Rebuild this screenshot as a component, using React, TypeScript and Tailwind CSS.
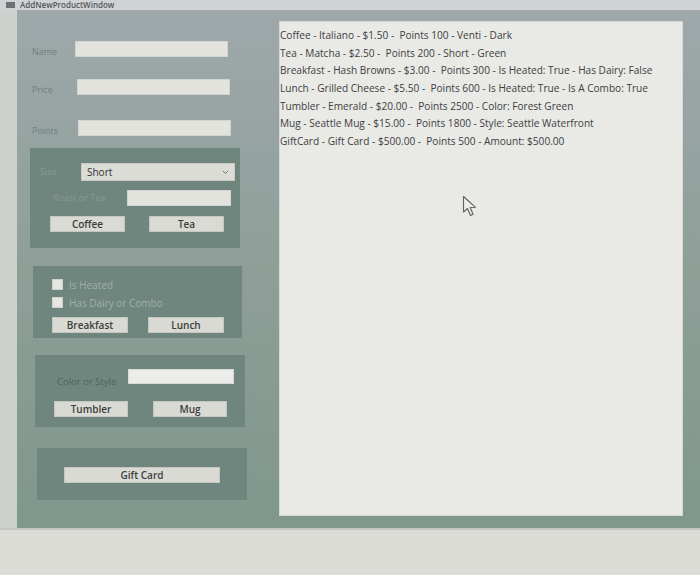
import React from 'react';

const ITEMS = [
  'Coffee - Italiano - $1.50 -  Points 100 - Venti - Dark',
  'Tea - Matcha - $2.50 -  Points 200 - Short - Green',
  'Breakfast - Hash Browns - $3.00 -  Points 300 - Is Heated: True - Has Dairy: False',
  'Lunch - Grilled Cheese - $5.50 -  Points 600 - Is Heated: True - Is A Combo: True',
  'Tumbler - Emerald - $20.00 -  Points 2500 - Color: Forest Green',
  'Mug - Seattle Mug - $15.00 -  Points 1800 - Style: Seattle Waterfront',
  'GiftCard - Gift Card - $500.00 -  Points 500 - Amount: $500.00',
];

const font = { fontFamily: '"Open Sans", "Noto Sans", sans-serif' };

function Btn({ label, className = '' }: { label: string; className?: string }) {
  return (
    <div
      className={`h-[16px] flex items-center justify-center bg-[#dadad4] border border-[#c4c6c0] text-[10px] leading-none font-semibold text-[#3a3d3b] ${className}`}
    >
      {label}
    </div>
  );
}

function TextBox({ className = '' }: { className?: string }) {
  return <div className={`h-[16px] bg-[#e3e3de] border border-[#d2d4cf] ${className}`} />;
}

function FieldRow({ label, mt, left }: { label: string; mt: string; left: string }) {
  return (
    <div className={`flex items-start h-[16px] ${mt}`}>
      <span className="w-[58px] pl-[15px] mt-[6px] text-[9px] leading-[10px] text-[#6f807b]">{label}</span>
      <TextBox className={`${left} w-[153px]`} />
    </div>
  );
}

function CheckRow({ label, mt }: { label: string; mt: string }) {
  return (
    <div className={`flex items-center gap-[6px] ${mt} ml-[19px]`}>
      <div className="w-[11px] h-[11px] bg-[#e6e6e1] border border-[#cfd2cc]" />
      <span className="text-[10px] leading-none text-[#a2b0a8]">{label}</span>
    </div>
  );
}

export default function App() {
  return (
    <div className="w-[700px] h-[575px] bg-[#dcdcd6] overflow-hidden" style={font}>
      {/* Title bar */}
      <div className="h-[10px] bg-[#d0d3d4] flex items-center gap-[5px] pl-[6px]">
        <div className="w-[9px] h-[6px] bg-[#6c7072]" />
        <span className="text-[8px] leading-[10px] font-semibold text-[#50565a]">AddNewProductWindow</span>
      </div>

      <div className="flex">
        <div className="w-[17px] h-[518px] bg-[#cdd0cc]" />

        {/* Window body */}
        <div className="flex flex-1 h-[518px] bg-gradient-to-b from-[#9ea8ab] via-[#8e9f98] to-[#7f978c]">
          {/* Left column */}
          <div className="w-[262px] flex flex-col">
            <FieldRow label="Name" mt="mt-[31px]" left="ml-0" />
            <FieldRow label="Price" mt="mt-[22px]" left="ml-[2px]" />
            <FieldRow label="Points" mt="mt-[25px]" left="ml-[3px]" />

            {/* Size / coffee / tea */}
            <div className="mt-[12px] ml-[13px] w-[210px] h-[100px] bg-[#6f867e] flex flex-col">
              <div className="flex items-center mt-[15px]">
                <span className="w-[51px] pl-[10px] text-[9px] text-[#8d9c96]">Size</span>
                <div className="w-[154px] h-[18px] bg-[#dcdcd7] border border-[#c9cbc6] flex items-center justify-between px-[5px]">
                  <span className="text-[10px] text-[#2f3331]">Short</span>
                  <svg width="7" height="5" viewBox="0 0 7 5">
                    <path d="M1 1 L3.5 3.5 L6 1" fill="none" stroke="#6d7370" strokeWidth="1" />
                  </svg>
                </div>
              </div>
              <div className="flex items-center mt-[9px]">
                <span className="w-[97px] pl-[23px] text-[9px] text-[#8a9993]">Roast or Tea</span>
                <TextBox className="w-[104px]" />
              </div>
              <div className="flex mt-[10px]">
                <Btn label="Coffee" className="ml-[20px] w-[75px]" />
                <Btn label="Tea" className="ml-[24px] w-[75px]" />
              </div>
            </div>

            {/* Breakfast / lunch */}
            <div className="mt-[18px] ml-[16px] w-[209px] h-[72px] bg-[#6f867e] flex flex-col">
              <CheckRow label="Is Heated" mt="mt-[13px]" />
              <CheckRow label="Has Dairy or Combo" mt="mt-[7px]" />
              <div className="flex mt-[9px]">
                <Btn label="Breakfast" className="ml-[19px] w-[76px]" />
                <Btn label="Lunch" className="ml-[20px] w-[76px]" />
              </div>
            </div>

            {/* Tumbler / mug */}
            <div className="mt-[17px] ml-[18px] w-[210px] h-[72px] bg-[#6f867e] flex flex-col">
              <div className="flex items-start h-[15px] mt-[14px]">
                <span className="w-[93px] pl-[22px] mt-[8px] text-[9.5px] leading-[10px] text-[#4e625b]">Color or Style</span>
                <div className="w-[106px] h-[15px] bg-[#ececea] border border-[#d8dad6]" />
              </div>
              <div className="flex mt-[17px]">
                <Btn label="Tumbler" className="ml-[19px] w-[74px]" />
                <Btn label="Mug" className="ml-[25px] w-[74px]" />
              </div>
            </div>

            {/* Gift card */}
            <div className="mt-[21px] ml-[20px] w-[210px] h-[52px] bg-[#6f867e] flex flex-col">
              <Btn label="Gift Card" className="mt-[19px] ml-[27px] w-[156px]" />
            </div>
          </div>

          {/* Product list */}
          <div className="relative mt-[11px] w-[404px] h-[495px] bg-[#e9e9e6] border border-[#d6d8d5] pt-[5px]">
            {ITEMS.map((item) => (
              <div key={item} className="h-[17.7px] text-[10.1px] leading-[17.7px] whitespace-pre text-[#3d403f]">
                {item}
              </div>
            ))}

            {/* Mouse pointer */}
            <svg className="absolute left-[182px] top-[173px]" width="18" height="24" viewBox="0 0 18 24">
              <path
                d="M1.5 1.5 L1.5 17 L5.5 13.5 L8.5 20.5 L11 19.3 L8.2 12.5 L13.5 12.3 Z"
                fill="#ececea"
                stroke="#5e6260"
                strokeWidth="1.1"
                strokeLinejoin="round"
              />
            </svg>
          </div>
        </div>
      </div>

      {/* Bottom separator */}
      <div className="h-[2px] bg-[#c4c6c2]" />
    </div>
  );
}
